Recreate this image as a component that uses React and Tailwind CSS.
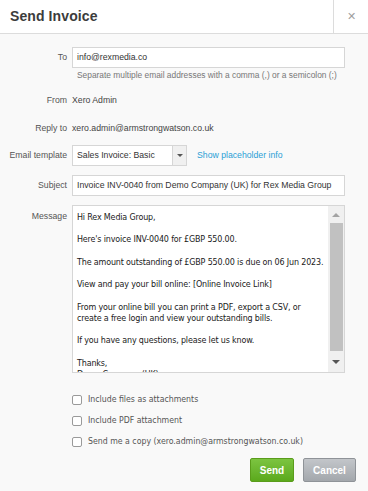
import React from 'react';

const arial = { fontFamily: '"Liberation Sans", Arial, sans-serif' };
const tahoma = { fontFamily: '"DejaVu Sans Condensed", "DejaVu Sans", sans-serif' };

function Label({ children, className = '' }) {
  return (
    <div className={`w-[68px] shrink-0 text-right pr-[1px] text-[8.7px] text-[#555] ${className}`}>{children}</div>
  );
}

function Checkbox({ label }) {
  return (
    <div className="flex items-center h-[14px] pl-[72px]">
      <span className="w-[10px] h-[10px] rounded-[2px] border border-[#9a9a9a] bg-white shrink-0" />
      <span className="ml-[6px] text-[8.7px] text-[#555] whitespace-nowrap" style={tahoma}>{label}</span>
    </div>
  );
}

const message = `Hi Rex Media Group,

Here's invoice INV-0040 for £GBP 550.00.

The amount outstanding of £GBP 550.00 is due on 06 Jun 2023.

View and pay your bill online: [Online Invoice Link]

From your online bill you can print a PDF, export a CSV, or
create a free login and view your outstanding bills.

If you have any questions, please let us know.

Thanks,
Demo Company (UK)`;

export default function App() {
  return (
    <div className="w-[368px] h-[491px] bg-[#f9f9f9] flex flex-col overflow-hidden" style={arial}>
      {/* Header */}
      <div className="h-[34px] bg-white border-b border-[#dcdcdc] flex shrink-0">
        <div className="flex-1 flex items-center pl-[10px]">
          <h1 className="text-[14px] font-bold text-[#3c3c3c] tracking-[0.1px]">Send Invoice</h1>
        </div>
        <div className="w-[35px] border-l border-[#dcdcdc] flex items-center justify-center text-[#a0a0a0] text-[11px]">✕</div>
      </div>

      {/* Form */}
      <div className="flex flex-col pt-[13px]">
        <div className="flex items-center h-[21px] gap-[4px]">
          <Label>To</Label>
          <div className="w-[273px] h-[21px] bg-white border border-[#d6d6d6] flex items-center pl-[4px] text-[8.7px] text-[#333]">
            info@rexmedia.co
          </div>
        </div>
        <div className="pl-[77px] mt-[2px] h-[11px] leading-[11px] text-[8.4px] text-[#777] whitespace-nowrap">
          Separate multiple email addresses with a comma (,) or a semicolon (;)
        </div>

        <div className="flex items-center h-[14px] gap-[4px] mt-[13px]">
          <Label>From</Label>
          <div className="text-[8.7px] text-[#444]">Xero Admin</div>
        </div>
        <div className="flex items-center h-[14px] gap-[4px] mt-[14px]">
          <Label>Reply to</Label>
          <div className="text-[8.7px] text-[#444]">xero.admin@armstrongwatson.co.uk</div>
        </div>

        <div className="flex items-center h-[21px] gap-[4px] mt-[9px]">
          <Label>Email template</Label>
          <div className="w-[115px] h-[21px] bg-white border border-[#d6d6d6] flex">
            <div className="flex-1 flex items-center pl-[4px] text-[8.7px] text-[#333]">Sales Invoice: Basic</div>
            <div className="w-[14px] border-l border-[#d6d6d6] bg-[#f0f0f0] flex items-center justify-center">
              <span className="w-0 h-0 border-l-[3px] border-r-[3px] border-t-[3px] border-l-transparent border-r-transparent border-t-[#555]" />
            </div>
          </div>
          <div className="ml-[6px] text-[8.7px] text-[#2a9fd6]">Show placeholder info</div>
        </div>

        <div className="flex items-center h-[21px] gap-[4px] mt-[9px]">
          <Label>Subject</Label>
          <div className="w-[273px] h-[21px] bg-white border border-[#d6d6d6] flex items-center pl-[4px] text-[8.7px] text-[#333] whitespace-nowrap overflow-hidden">
            Invoice INV-0040 from Demo Company (UK) for Rex Media Group
          </div>
        </div>

        <div className="flex items-start gap-[4px] mt-[9px]">
          <Label className="pt-[5px]">Message</Label>
          <div className="w-[273px] h-[168px] bg-white border border-[#d6d6d6] flex overflow-hidden">
            <div
              className="flex-1 pl-[4px] pt-[6px] whitespace-pre text-[8.9px] tracking-[-0.15px] leading-[11.2px] text-[#1a1a1a] overflow-hidden"
              style={tahoma}
            >
              {message}
            </div>
            <div className="w-[16px] bg-[#f0f0f0] flex flex-col items-center shrink-0">
              <div className="h-[17px] flex items-center justify-center">
                <span className="w-0 h-0 border-l-[4px] border-r-[4px] border-b-[4px] border-l-transparent border-r-transparent border-b-[#a3a3a3]" />
              </div>
              <div className="w-[13px] h-[128px] bg-[#c1c1c1]" />
              <div className="flex-1 flex items-center justify-center">
                <span className="w-0 h-0 border-l-[4px] border-r-[4px] border-t-[4px] border-l-transparent border-r-transparent border-t-[#555]" />
              </div>
            </div>
          </div>
        </div>

        <div className="flex flex-col mt-[20px] gap-[7px]">
          <Checkbox label="Include files as attachments" />
          <Checkbox label="Include PDF attachment" />
          <Checkbox label="Send me a copy (xero.admin@armstrongwatson.co.uk)" />
        </div>

        <div className="flex justify-end gap-[9px] pr-[12px] mt-[9px]">
          <button className="w-[44px] h-[24px] rounded-[2px] border border-[#5a9c1b] bg-gradient-to-b from-[#7cc440] to-[#5ba91b] text-white text-[10px] font-bold">
            Send
          </button>
          <button className="w-[53px] h-[24px] rounded-[2px] border border-[#8f9398] bg-gradient-to-b from-[#c3c6ca] to-[#a3a7ac] text-white text-[10px] font-bold">
            Cancel
          </button>
        </div>
      </div>
    </div>
  );
}
